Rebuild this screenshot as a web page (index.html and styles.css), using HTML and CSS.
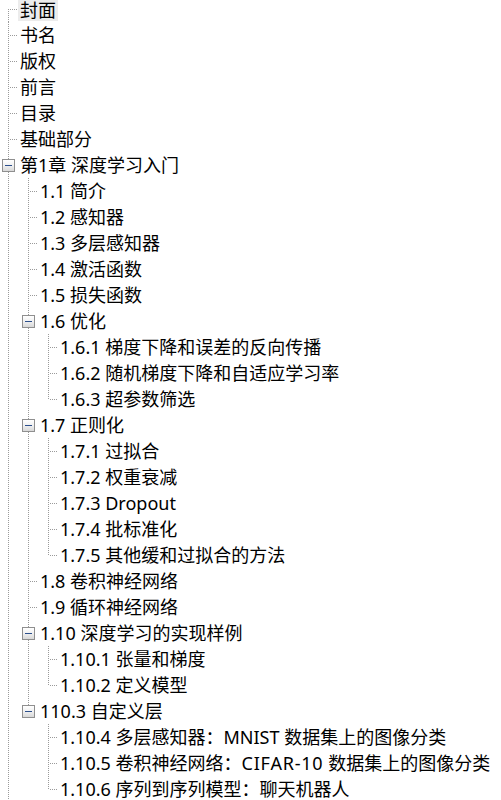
FILE: index.html
```html
<!DOCTYPE html>
<html lang="zh-CN">
<head>
<meta charset="utf-8">
<title>目录树</title>
<link rel="stylesheet" href="styles.css">
</head>
<body>
<div class="tree">
  <div class="row first"><span class="c last f"></span><span class="label sel">封面</span></div>
  <div class="row"><span class="c last t"></span><span class="label">书名</span></div>
  <div class="row"><span class="c last t"></span><span class="label">版权</span></div>
  <div class="row"><span class="c last t"></span><span class="label">前言</span></div>
  <div class="row"><span class="c last t"></span><span class="label">目录</span></div>
  <div class="row"><span class="c last t"></span><span class="label">基础部分</span></div>
  <div class="row"><span class="c last xt"><span class="box"></span></span><span class="label">第1章 深度学习入门</span></div>
  <div class="row"><span class="c v"></span><span class="c last t"></span><span class="label">1.1 简介</span></div>
  <div class="row"><span class="c v"></span><span class="c last t"></span><span class="label">1.2 感知器</span></div>
  <div class="row"><span class="c v"></span><span class="c last t"></span><span class="label">1.3 多层感知器</span></div>
  <div class="row"><span class="c v"></span><span class="c last t"></span><span class="label">1.4 激活函数</span></div>
  <div class="row"><span class="c v"></span><span class="c last t"></span><span class="label">1.5 损失函数</span></div>
  <div class="row"><span class="c v"></span><span class="c last xt"><span class="box"></span></span><span class="label">1.6 优化</span></div>
  <div class="row"><span class="c v"></span><span class="c v"></span><span class="c last t"></span><span class="label">1.6.1 梯度下降和误差的反向传播</span></div>
  <div class="row"><span class="c v"></span><span class="c v"></span><span class="c last t"></span><span class="label">1.6.2 随机梯度下降和自适应学习率</span></div>
  <div class="row"><span class="c v"></span><span class="c v"></span><span class="c last l"></span><span class="label">1.6.3 超参数筛选</span></div>
  <div class="row"><span class="c v"></span><span class="c last xt"><span class="box"></span></span><span class="label">1.7 正则化</span></div>
  <div class="row"><span class="c v"></span><span class="c v"></span><span class="c last t"></span><span class="label">1.7.1 过拟合</span></div>
  <div class="row"><span class="c v"></span><span class="c v"></span><span class="c last t"></span><span class="label">1.7.2 权重衰减</span></div>
  <div class="row"><span class="c v"></span><span class="c v"></span><span class="c last t"></span><span class="label">1.7.3 Dropout</span></div>
  <div class="row"><span class="c v"></span><span class="c v"></span><span class="c last t"></span><span class="label">1.7.4 批标准化</span></div>
  <div class="row"><span class="c v"></span><span class="c v"></span><span class="c last l"></span><span class="label">1.7.5 其他缓和过拟合的方法</span></div>
  <div class="row"><span class="c v"></span><span class="c last t"></span><span class="label">1.8 卷积神经网络</span></div>
  <div class="row"><span class="c v"></span><span class="c last t"></span><span class="label">1.9 循环神经网络</span></div>
  <div class="row"><span class="c v"></span><span class="c last xt"><span class="box"></span></span><span class="label">1.10 深度学习的实现样例</span></div>
  <div class="row"><span class="c v"></span><span class="c v"></span><span class="c last t"></span><span class="label">1.10.1 张量和梯度</span></div>
  <div class="row"><span class="c v"></span><span class="c v"></span><span class="c last l"></span><span class="label">1.10.2 定义模型</span></div>
  <div class="row"><span class="c v"></span><span class="c last xl"><span class="box"></span></span><span class="label">110.3 自定义层</span></div>
  <div class="row"><span class="c v"></span><span class="c e"></span><span class="c last t"></span><span class="label">1.10.4 多层感知器：MNIST 数据集上的图像分类</span></div>
  <div class="row"><span class="c v"></span><span class="c e"></span><span class="c last t"></span><span class="label">1.10.5 卷积神经网络：<span class="wide">CIFAR-10</span> 数据集上的图像分类</span></div>
  <div class="row"><span class="c v"></span><span class="c e"></span><span class="c last l"></span><span class="label">1.10.6 序列到序列模型：聊天机器人</span></div>
</div>
</body>
</html>
```

FILE: styles.css
```css
html, body {
  margin: 0;
  padding: 0;
  background: #ffffff;
  overflow: hidden;
}

.tree {
  font-family: "Noto Sans", "Noto Sans CJK SC", sans-serif;
  font-size: 18px;
  color: #000000;
}

.row {
  display: flex;
  align-items: stretch;
  height: 26px;
  white-space: nowrap;
}

.row.first {
  height: 22px;
}

.c {
  flex: 0 0 20px;
  width: 20px;
  height: 26px;
  background-repeat: no-repeat;
}

.row.first .c {
  height: 22px;
}

.c.last {
  flex-basis: 18px;
  width: 18px;
}

/* vertical line through the whole row */
.v,
.xt {
  background-image: repeating-linear-gradient(to bottom, #9a9a9a 0 1px, transparent 1px 2px);
  background-position: 8px 0;
  background-size: 1px 26px;
}

/* tee: full vertical + horizontal stub */
.t {
  background-image:
    repeating-linear-gradient(to bottom, #9a9a9a 0 1px, transparent 1px 2px),
    repeating-linear-gradient(to right, #9a9a9a 0 1px, transparent 1px 2px);
  background-position: 8px 0, 10px 13px;
  background-size: 1px 26px, 8px 1px;
}

/* elbow: top half vertical + horizontal stub */
.l {
  background-image:
    repeating-linear-gradient(to bottom, #9a9a9a 0 1px, transparent 1px 2px),
    repeating-linear-gradient(to right, #9a9a9a 0 1px, transparent 1px 2px);
  background-position: 8px 0, 10px 13px;
  background-size: 1px 13px, 8px 1px;
}

/* first root: bottom half vertical + horizontal stub (row is 4px shorter, scrolled) */
.f {
  background-image:
    repeating-linear-gradient(to bottom, #9a9a9a 0 1px, transparent 1px 2px),
    repeating-linear-gradient(to right, #9a9a9a 0 1px, transparent 1px 2px);
  background-position: 8px 9px, 10px 9px;
  background-size: 1px 13px, 8px 1px;
}

.xl {
  background-image: repeating-linear-gradient(to bottom, #9a9a9a 0 1px, transparent 1px 2px);
  background-position: 8px 0;
  background-size: 1px 8px;
}

.xt,
.xl {
  display: flex;
  align-items: center;
}

.box {
  box-sizing: border-box;
  width: 13px;
  height: 13px;
  margin-left: 2px;
  border: 1px solid #8f8f8f;
  background:
    linear-gradient(#2c4f8c, #2c4f8c) center / 7px 1px no-repeat,
    linear-gradient(to bottom, #ffffff 0%, #f0f0f0 50%, #d8d8d8 100%);
}

.label {
  align-self: center;
  height: 24px;
  line-height: 24px;
  padding: 0 2px;
}

.row.first .label {
  align-self: flex-start;
  height: 21px;
  line-height: 20px;
}

.label.sel {
  background: #ececec;
}

.wide {
  letter-spacing: 0.8px;
}
```
